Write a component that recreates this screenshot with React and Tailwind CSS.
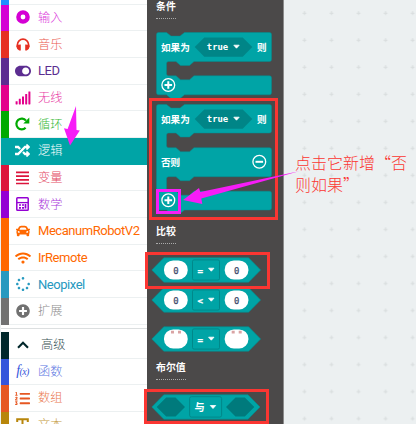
import React from "react";
import { FaToggleOn, FaSignal, FaRandom, FaCar, FaWifi, FaSpinner, FaPlusCircle, FaListOl } from "react-icons/fa";

const RingIcon = () => (
  <svg width="14" height="14" viewBox="0 0 14 14">
    <circle cx="7" cy="7" r="4.6" fill="none" stroke="currentColor" strokeWidth="4.4" />
  </svg>
);

const HeadphonesIcon = () => (
  <svg width="14" height="13" viewBox="0 0 14 13">
    <path d="M1.4 9V6.8a5.6 5.6 0 0 1 11.2 0V9" fill="none" stroke="currentColor" strokeWidth="1.7" />
    <path d="M0.5 7.4Q1.5 6.6 4.8 6.6V12.5H3.2Q0.8 11.6 0.5 9ZM13.5 7.4Q12.5 6.6 9.2 6.6V12.5H10.8Q13.2 11.6 13.5 9Z" fill="currentColor" />
  </svg>
);

const LoopIcon = () => (
  <svg width="15" height="14" viewBox="0 0 15 14">
    <path d="M10.6 10.8A5.4 5.4 0 1 1 11 3.6" fill="none" stroke="currentColor" strokeWidth="2.2" />
    <path d="M14.3 0.4V6.4H8.3Z" fill="currentColor" />
  </svg>
);

const BarsIcon = () => (
  <svg width="13" height="14" viewBox="0 0 13 14">
    <path d="M0 1.4h13M0 5.1h13M0 8.8h13M0 12.5h13" stroke="currentColor" strokeWidth="1.7" />
  </svg>
);

const CalculatorIcon = () => (
  <svg width="13" height="14" viewBox="0 0 13 14">
    <rect x="0.8" y="0.8" width="11.4" height="12.4" rx="0.8" fill="none" stroke="currentColor" strokeWidth="1.5" />
    <path d="M1 5.6H12" stroke="currentColor" strokeWidth="1.3" />
    <path d="M3 8h2M3 10.8h2M6 8h2M6 10.8h2M9.5 7v4.6" stroke="currentColor" strokeWidth="1.7" />
  </svg>
);

const ChevronIcon = () => (
  <svg width="12" height="8" viewBox="0 0 12 8">
    <path d="M1 6.8L6 1.8L11 6.8" fill="none" stroke="currentColor" strokeWidth="2.1" />
  </svg>
);

const FxIcon = () => (
  <span className="whitespace-nowrap font-['Liberation_Serif',serif] text-[14px] leading-none italic tracking-[-0.6px]">
    f<span className="text-[10px]">(x)</span>
  </span>
);

const TextIcon = () => (
  <svg width="13" height="13" viewBox="0 0 13 13">
    <path d="M1.2 4V1.2H11.8V4M6.5 1.2V11.8M4 11.8H9" fill="none" stroke="currentColor" strokeWidth="2" />
  </svg>
);

const categories = [
  { label: "输入", strip: "bg-[#d400d4]", ink: "text-[#d400d4]", icon: <RingIcon /> },
  { label: "音乐", strip: "bg-[#e63022]", ink: "text-[#e63022]", icon: <HeadphonesIcon /> },
  { label: "LED", strip: "bg-[#5c2d91]", ink: "text-[#5c2d91]", icon: <FaToggleOn size={16} /> },
  { label: "无线", strip: "bg-[#e3008c]", ink: "text-[#e3008c]", icon: <FaSignal size={16} /> },
  { label: "循环", strip: "bg-[#00aa00]", ink: "text-[#00aa00]", icon: <LoopIcon /> },
  { label: "逻辑", active: true, strip: "bg-[#00a4a6]", ink: "text-white", icon: <FaRandom size={15} /> },
  { label: "变量", strip: "bg-[#dc143c]", ink: "text-[#dc143c]", icon: <BarsIcon /> },
  { label: "数学", strip: "bg-[#9400d3]", ink: "text-[#9400d3]", icon: <CalculatorIcon /> },
  { label: "MecanumRobotV2", strip: "bg-[#ff6800]", ink: "text-[#ff6800]", icon: <FaCar size={14} /> },
  { label: "IrRemote", strip: "bg-[#ff6800]", ink: "text-[#ff6800]", icon: <FaWifi size={16} /> },
  { label: "Neopixel", strip: "bg-[#2699bf]", ink: "text-[#2699bf]", icon: <FaSpinner size={14} /> },
  { label: "扩展", strip: "bg-[#717171]", ink: "text-[#717171]", icon: <FaPlusCircle size={14} /> },
];

const advanced = [
  { label: "高级", indent: true, strip: "bg-[#00272b]", ink: "text-[#00272b]", icon: <ChevronIcon /> },
  { label: "函数", strip: "bg-[#3455db]", ink: "text-[#3455db]", icon: <FxIcon /> },
  { label: "数组", strip: "bg-[#e65722]", ink: "text-[#e65722]", icon: <FaListOl size={15} /> },
  { label: "文本", strip: "bg-[#b8860b]", ink: "text-[#b8860b]", icon: <TextIcon /> },
];

function Category({ label, strip, ink, icon, active, indent }) {
  const latin = /[A-Z]/.test(label);
  return (
    <div className={`flex h-[26.7px] shrink-0 ${active ? "bg-[#00a4a6]" : "bg-white"} ${ink}`}>
      <div className={`w-2 shrink-0 ${strip}`} />
      <div className={`flex flex-1 items-center border-b ${active ? "border-[#00a4a6]" : "border-[#ecf0f1]"}`}>
        <div className="flex w-[27px] shrink-0 justify-center">{icon}</div>
        <span
          className={`whitespace-nowrap leading-none ${indent ? "ml-[5px]" : "ml-[2px]"} ${
            latin
              ? "font-[Roboto,sans-serif] text-[13px] tracking-[-0.45px]"
              : "pb-px font-['Noto_Sans_CJK_SC',sans-serif] text-[12.2px] font-light"
          } ${latin || active ? "" : "opacity-80"}`}
        >
          {label}
        </span>
      </div>
    </div>
  );
}

function Heading({ children, className }) {
  return (
    <div className={`flex shrink-0 pl-[9px] ${className}`}>
      <span className="h-[19px] border-b border-dotted border-[#aaa] font-['Noto_Sans_CJK_SC',sans-serif] text-[9.9px] leading-[13px] font-bold text-white">
        {children}
      </span>
    </div>
  );
}

const TEAL = "#00a4a6";
const EDGE = "#008f91";
const zh = "font-['Noto_Sans_CJK_SC',sans-serif] font-bold";
const mono = "font-['DejaVu_Sans_Mono',monospace]";

const Caret = ({ x, y }) => (
  <path d={`M${x - 2.7} ${y - 1.5}h5.4l-2.7 3z`} fill="#fff" stroke="#fff" strokeWidth="0.8" strokeLinejoin="round" />
);

const Sign = ({ x, y, plus }) => (
  <g fill="none" stroke="#fff">
    <circle cx={x} cy={y} r="6.4" strokeWidth="1.3" />
    <path d={plus ? `M${x - 3.8} ${y}h7.6M${x} ${y - 3.8}v7.6` : `M${x - 3.8} ${y}h7.6`} strokeWidth="2" />
  </g>
);

// Header row of an "if" block; y is the block's top edge.
const IfHeader = ({ y }) => (
  <g>
    <path d={`M204.3 ${y + 5}H242.7L252.3 ${y + 14.6}L242.7 ${y + 24.3}H204.3L194.7 ${y + 14.6}Z`} fill="#008587" />
    <text x="161" y={y + 18} fontSize="9.6" fill="#fff" className={zh}>如果为</text>
    <text x="206.8" y={y + 17.6} fontSize="8.9" fill="#fff" className={`${mono} font-bold`}>true</text>
    <Caret x={236.5} y={y + 14.2} />
    <text x="257" y={y + 18} fontSize="9.6" fill="#fff" className={zh}>则</text>
  </g>
);

const top = (y) => `M156.5 ${y + 2}q0 -2 2 -2H166.5l4.5 3.6h9l4.5 -3.6H269.5q2 0 2 2`;
const mouth = (y1, y2) =>
  `V${y1 - 2}q0 2 -2 2H194l-4.5 4h-9l-4.5 -4H168.5q-2 0 -2 2V${y2 - 2}q0 2 2 2H176l4.5 4h9l4.5 -4H269.5q2 0 2 2`;
const foot = (y) => `V${y - 2}q0 2 -2 2H184.5l-4.5 3.6h-9l-4.5 -3.6H158.5q-2 0 -2 -2Z`;

function IfBlock() {
  return (
    <svg className="block shrink-0" width="136" height="70" viewBox="147 30 136 70">
      <path d={top(32.5) + mouth(61.5, 75.8) + foot(94.8)} fill={TEAL} stroke={EDGE} strokeWidth="0.5" />
      <IfHeader y={32.5} />
      <Sign x={168.3} y={85} plus />
    </svg>
  );
}

function IfElseBlock() {
  return (
    <svg className="block shrink-0" width="136" height="120" viewBox="147 100 136 120">
      <path d={top(104.5) + mouth(133, 147.7) + mouth(176.7, 191.2) + foot(210)} fill={TEAL} stroke={EDGE} strokeWidth="0.5" />
      <IfHeader y={104.5} />
      <text x="161" y="166" fontSize="9.6" fill="#fff" className={zh}>否则</text>
      <Sign x={259.3} y={161.8} />
      <Sign x={168.3} y={200.3} plus />
    </svg>
  );
}

const hex = (x1, x2, c, h, s) => `M${x1} ${c}L${x1 + s} ${c - h}H${x2 - s}L${x2} ${c}L${x2 - s} ${c + h}H${x1 + s}Z`;

function CompareBlock({ operator, quotes }) {
  return (
    <svg className="block shrink-0" width="136" height="26" viewBox="147 0 136 26">
      <path d={hex(151.8, 260.6, 13, 12.2, 12)} fill={TEAL} stroke={EDGE} strokeWidth="0.6" />
      {[164, 224.7].map((x) => (
        <g key={x}>
          <rect x={x} y="3.4" width="23.7" height="19" rx="9.2" fill="#fff" />
          {quotes ? (
            <path d={`M${x + 7} 4.8h3v2.8h-3zM${x + 14} 4.8h3v2.8h-3z`} fill="#d9a4a4" />
          ) : (
            <text x={x + 11.9} y="16.6" fontSize="8.9" textAnchor="middle" fill="#414b6b" stroke="#414b6b" strokeWidth="0.25" className={mono}>0</text>
          )}
        </g>
      ))}
      <rect x="192.5" y="2.9" width="27" height="20.2" rx="1.5" fill="none" stroke="#008587" strokeWidth="0.9" />
      <text x="200.2" y="16.9" fontSize="9.2" textAnchor="middle" fill="#fff" stroke="#fff" strokeWidth="0.3" className={`${mono} font-bold`}>{operator}</text>
      <Caret x={211.3} y={12.7} />
    </svg>
  );
}

function BooleanBlock() {
  return (
    <svg className="block shrink-0" width="136" height="26" viewBox="147 0 136 26">
      <path d={hex(151.8, 260, 13, 12.2, 12)} fill={TEAL} stroke={EDGE} strokeWidth="0.6" />
      <path d={hex(156.7, 185, 13, 9.6, 9.5) + hex(226, 254.3, 13, 9.6, 9.5)} fill="#007a7c" />
      <rect x="189.6" y="2.7" width="32" height="20.4" rx="1.8" fill="none" stroke="#008587" strokeWidth="0.9" />
      <text x="194.5" y="17" fontSize="10.2" fill="#fff" className={zh}>与</text>
      <Caret x={213} y={13} />
    </svg>
  );
}

function Annotations() {
  return (
    <svg className="pointer-events-none absolute inset-0" width="416" height="424" viewBox="0 0 416 424">
      <g fill="none" stroke="#fb3632" strokeWidth="3">
        <rect x="150.5" y="99.5" width="126" height="119" />
        <rect x="146.5" y="253.5" width="122" height="34" />
        <rect x="145.5" y="390.5" width="122" height="32" />
      </g>
      <rect x="157.5" y="190.5" width="22" height="22" fill="none" stroke="#f71cf7" strokeWidth="3" />
      <path d="M183 200L199 188L200.3 192L299 171.3L201.3 198.5L202.3 204Z" fill="#f71cf7" />
      <path d="M76 106L76.5 130L79.8 130.4L70 145.5L64 128.3L67.6 129Z" fill="#f71cf7" />
    </svg>
  );
}

function Workspace() {
  return (
    <div className="relative flex-1 bg-[#ecf0f1]">
      <svg className="block" width="132" height="424" viewBox="284 0 132 424">
        <defs>
          <pattern id="grid" x="290.8" y="-0.5" width="27.03" height="27.03" patternUnits="userSpaceOnUse">
            <path d="M11.7 13.7h4M13.7 11.7v4" stroke="#d8dcdd" strokeWidth="1" />
          </pattern>
        </defs>
        <rect x="284" width="132" height="424" fill="url(#grid)" />
      </svg>
      <p className="absolute top-[151px] left-[11px] w-[113px] font-['Noto_Sans_CJK_SC',sans-serif] text-[16px] leading-[22px] font-light whitespace-nowrap text-[#fb3632]">
        点击它新增“否
        <br />
        则如果”
      </p>
    </div>
  );
}

export default function App() {
  return (
    <div className="relative flex h-[424px] w-[416px] overflow-hidden bg-white">
      <nav className="flex w-[147px] shrink-0 flex-col overflow-hidden border-l border-[#ecf0f1] bg-white">
        <div className="flex h-[4.6px] shrink-0">
          <div className="w-2 bg-[#1e90ff]" />
          <div className="flex-1 border-b border-[#ecf0f1]" />
        </div>
        {categories.map((c) => (
          <Category key={c.label} {...c} />
        ))}
        <div className="flex h-[7px] shrink-0 flex-col justify-center">
          <div className="h-px bg-[#dcdfe0]" />
        </div>
        {advanced.map((c) => (
          <Category key={c.label} {...c} />
        ))}
      </nav>
      <main className="flex w-[137px] shrink-0 flex-col overflow-hidden border-r border-[#8b8b8b] bg-[#4b4949]">
        <Heading className="h-[30px]">条件</Heading>
        <IfBlock />
        <IfElseBlock />
        <Heading className="h-[37.3px] pt-[5px]">比较</Heading>
        <CompareBlock operator="=" />
        <div className="h-[3.4px] shrink-0" />
        <CompareBlock operator="<" />
        <div className="h-[13px] shrink-0" />
        <CompareBlock operator="=" quotes />
        <Heading className="h-[42px] pt-[9px]">布尔值</Heading>
        <BooleanBlock />
      </main>
      <Workspace />
      <Annotations />
    </div>
  );
}
